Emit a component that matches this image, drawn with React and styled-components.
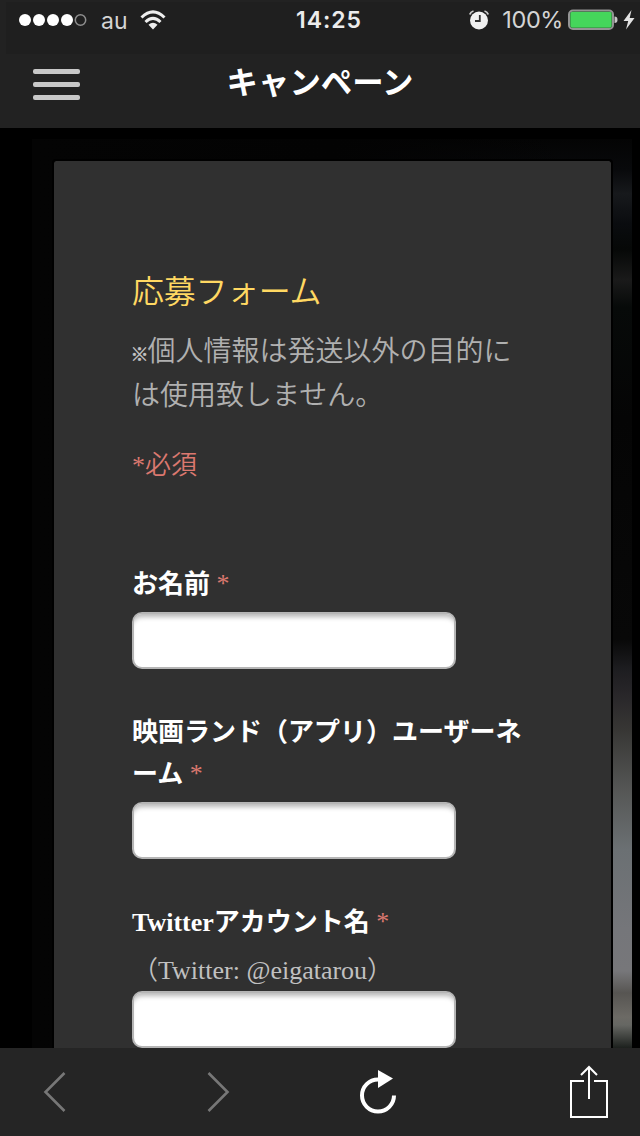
import React from "react";
import styled, { createGlobalStyle } from "styled-components";

const GlobalStyle = createGlobalStyle`
  * {
    box-sizing: border-box;
  }
  body {
    margin: 0;
    background: #000;
    overflow: hidden;
  }
`;

const Screen = styled.div`
  width: 640px;
  height: 1136px;
  display: flex;
  flex-direction: column;
  overflow: hidden;
  background: #000;
  font-family: "Liberation Serif", "Noto Sans CJK JP", serif;
`;

const Header = styled.header`
  flex: none;
  height: 128px;
  padding-top: 2px;
  background: #222222;
`;

const StatusBar = styled.div`
  display: grid;
  grid-template-columns: 1fr auto 1fr;
  align-items: center;
  height: 52px;
  margin-left: 6px;
  padding: 0 5px 16px 12px;
  background: #1f1f1f;
  color: #d4d4d4;
  font-family: Inter, Roboto, sans-serif;
  font-size: 23px;
  line-height: 32px;
`;

const StatusSide = styled.div`
  display: flex;
  align-items: center;
  justify-content: ${(props) => (props.$end ? "flex-end" : "flex-start")};
`;

const Carrier = styled.span`
  margin: 1px 12px 0 13px;
  font-size: 23px;
`;

const Clock = styled.span`
  color: #ececec;
  font-size: 23px;
  font-weight: 600;
  letter-spacing: 1px;
  margin: 0 0 0 5px;
`;

const Percent = styled.span`
  margin: 0 5px 0 13px;
  font-size: 23.5px;
  letter-spacing: -0.4px;
`;

const NavBar = styled.div`
  display: grid;
  grid-template-columns: 80px 1fr 80px;
  align-items: center;
  height: 74px;
`;

const MenuButton = styled.div`
  display: flex;
  flex-direction: column;
  gap: 8px;
  margin: 0 0 13px 33px;
`;

const MenuLine = styled.span`
  height: 5px;
  border-radius: 2px;
  background: #c8c8c8;
`;

const PageTitle = styled.h1`
  margin: 0 0 21px;
  color: #fff;
  font-family: "Noto Sans CJK JP", sans-serif;
  font-size: 31.4px;
  font-weight: 700;
  line-height: 46px;
  text-align: center;
`;

const Page = styled.main`
  flex: 1;
  min-height: 0;
  overflow: hidden;
  padding: 11px 8px 0 32px;
`;

const Backdrop = styled.div`
  height: 909px;
  padding: 20px 19px 0 20px;
  background: linear-gradient(
      90deg,
      #040404 0,
      #030303 50%,
      transparent 90%
    ),
    linear-gradient(
      #040404 0,
      #08090b 30px,
      #17191c 55px,
      #0a0c0f 85px,
      #060807 110px,
      #1a1a1a 141px,
      #070a09 168px,
      #050505 280px,
      #080808 500px,
      #1d1d20 530px,
      #282629 555px,
      #373634 590px,
      #555655 650px,
      #6b7073 710px,
      #75767a 790px,
      #77777a 832px,
      #575552 854px,
      #6c6a65 878px,
      #666763 886px,
      #1c201d 909px
    );
`;

const Card = styled.form`
  height: 900px;
  padding: 106px 76px 0 78px;
  border: 2px solid #000;
  border-width: 2px 2px 0;
  border-radius: 4px 4px 0 0;
  background: #303030;
  background-clip: padding-box;
`;

const FormTitle = styled.h2`
  margin: 0;
  color: #ffd862;
  font-family: "Noto Sans CJK JP", sans-serif;
  font-size: 32px;
  font-weight: 350;
  letter-spacing: -0.3px;
  line-height: 44px;
  white-space: nowrap;
`;

const Description = styled.p`
  margin: 16px 0 0;
  color: #b0b0b0;
  font-family: "Noto Sans CJK JP", sans-serif;
  font-size: 28px;
  font-weight: 350;
  line-height: 44px;
  white-space: nowrap;
`;

const NoteMark = styled.span`
  margin: 0 -1px 0 -1.5px;
  color: #c4c4c4;
  font-size: 18px;
  font-weight: 900;
  line-height: 0;
  -webkit-text-stroke: 0.5px #c4c4c4;
`;

const RequiredNote = styled.p`
  margin: 29px 0 0;
  color: #db786f;
  font-size: 26px;
  font-weight: 350;
  line-height: 44px;
`;

const Fields = styled.div`
  display: flex;
  flex-direction: column;
  gap: 43px;
  margin-top: 76px;
`;

const Label = styled.label`
  display: block;
  margin-bottom: 6px;
  color: #fff;
  font-size: 26px;
  font-weight: 700;
  line-height: 42px;
  white-space: nowrap;
`;

const Asterisk = styled.span`
  color: #db786f;
  font-weight: 400;
  line-height: 0;
  vertical-align: 1px;
`;

const Hint = styled.div`
  height: 41px;
  color: #c1c1c1;
  font-size: 26px;
  font-weight: 350;
  line-height: 42px;
`;

const TextInput = styled.input`
  display: block;
  width: 324px;
  height: 57px;
  padding: 0 12px;
  border: 2px solid #b5b5b5;
  border-radius: 10px;
  background: #fff;
  box-shadow: inset 0 6px 5px -3px #b8b8b8;
  outline: none;
`;

const Toolbar = styled.footer`
  display: grid;
  flex: none;
  grid-template-columns: 163px 154px 210px 40px;
  align-items: center;
  height: 88px;
  padding-left: 42px;
  background: #252525;
`;

const StatusIcons = {
  Signal: () => (
    <svg width="70" height="14" viewBox="0 0 70 14">
      {[7, 21, 35, 49].map((x) => (
        <circle key={x} cx={x} cy="7" r="6" fill="#fff" />
      ))}
      <circle cx="62.5" cy="7" r="5.2" fill="none" stroke="#8e8e8e" strokeWidth="1.5" />
    </svg>
  ),
  Wifi: () => (
    <svg width="26" height="20" viewBox="0 0 26 20">
      <g fill="none" stroke="#eee" strokeWidth="3">
        <path d="M1.5 7.5Q13-3.6 24.5 7.5" />
        <path d="M5.5 12Q13 4.8 20.5 12" />
      </g>
      <path d="M8.5 14.8Q13 10.5 17.5 14.8L13 19.5Z" fill="#eee" />
    </svg>
  ),
  Alarm: () => (
    <svg width="20" height="20" viewBox="0 0 20 20">
      <circle cx="10" cy="10.5" r="9" fill="#f0f0f0" />
      <path d="M.8 4.5Q1.6 1.8 4.5 1M19.2 4.5Q18.4 1.8 15.5 1" fill="none" stroke="#ccc" strokeWidth="1.8" />
      <path d="M10.8 5v6H6" fill="none" stroke="#333" strokeWidth="1.8" />
    </svg>
  ),
  Battery: () => (
    <svg width="55" height="22" viewBox="0 0 55 22">
      <rect x="1" y="1.5" width="44" height="18.5" rx="4" fill="#222" stroke="#949494" strokeWidth="2" />
      <rect x="2.3" y="2.8" width="41.4" height="15.9" rx="2" fill="#45d65b" />
      <path d="M46.5 7.5q3 0 3 3.3t-3 3.3Z" fill="#c8c8c8" />
    </svg>
  ),
  Bolt: () => (
    <svg width="12" height="20" viewBox="0 0 12 20">
      <path d="M8.5 0L.5 11h4.7L3 19.5 11.5 8H6.7Z" fill="#e2e2e2" />
    </svg>
  ),
};

const FIELDS = [
  { id: "name", label: "お名前" },
  {
    id: "user",
    label: (
      <>
        映画ランド（アプリ）ユーザーネ
        <br />
        ーム
      </>
    ),
  },
  { id: "twitter", label: "Twitterアカウント名", hint: "（Twitter: @eigatarou）" },
];

const App = () => {
  return (
    <>
      <GlobalStyle />
      <Screen lang="ja">
        <Header>
          <StatusBar>
            <StatusSide>
              <StatusIcons.Signal />
              <Carrier>au</Carrier>
              <StatusIcons.Wifi />
            </StatusSide>
            <Clock>14:25</Clock>
            <StatusSide $end>
              <StatusIcons.Alarm />
              <Percent>100%</Percent>
              <StatusIcons.Battery />
              <StatusIcons.Bolt />
            </StatusSide>
          </StatusBar>
          <NavBar>
            <MenuButton>
              <MenuLine />
              <MenuLine />
              <MenuLine />
            </MenuButton>
            <PageTitle>キャンペーン</PageTitle>
          </NavBar>
        </Header>
        <Page>
          <Backdrop>
            <Card>
              <FormTitle>応募フォーム</FormTitle>
              <Description>
                <NoteMark>※</NoteMark>個人情報は発送以外の目的に
                <br />
                は使用致しません。
              </Description>
              <RequiredNote>*必須</RequiredNote>
              <Fields>
                {FIELDS.map((field) => (
                  <div key={field.id}>
                    <Label htmlFor={field.id}>
                      {field.label} <Asterisk>*</Asterisk>
                    </Label>
                    {field.hint && <Hint>{field.hint}</Hint>}
                    <TextInput id={field.id} type="text" />
                  </div>
                ))}
              </Fields>
            </Card>
          </Backdrop>
        </Page>
        <Toolbar>
          <svg width="26" height="42" viewBox="0 0 26 42" fill="none" stroke="#777" strokeWidth="2.6">
            <path d="M22.5 2L3.5 21L22.5 40" />
          </svg>
          <svg width="26" height="42" viewBox="0 0 26 42" fill="none" stroke="#777" strokeWidth="2.6">
            <path d="M3.5 2L22.5 21L3.5 40" />
          </svg>
          <svg width="38" height="46" viewBox="0 0 38 46">
            <path d="M19 10.5A16 16 0 1 0 35 26.5" fill="none" stroke="#fff" strokeWidth="4" />
            <path d="M19 1L34 9.5L19 19Z" fill="#fff" />
          </svg>
          <svg width="40" height="54" viewBox="0 0 40 54" fill="none" stroke="#fff" strokeWidth="2">
            <path d="M15 16H2V52H38V16H25" />
            <path d="M20 34V2M12 10L20 2L28 10" />
          </svg>
        </Toolbar>
      </Screen>
    </>
  );
};

export default App;
